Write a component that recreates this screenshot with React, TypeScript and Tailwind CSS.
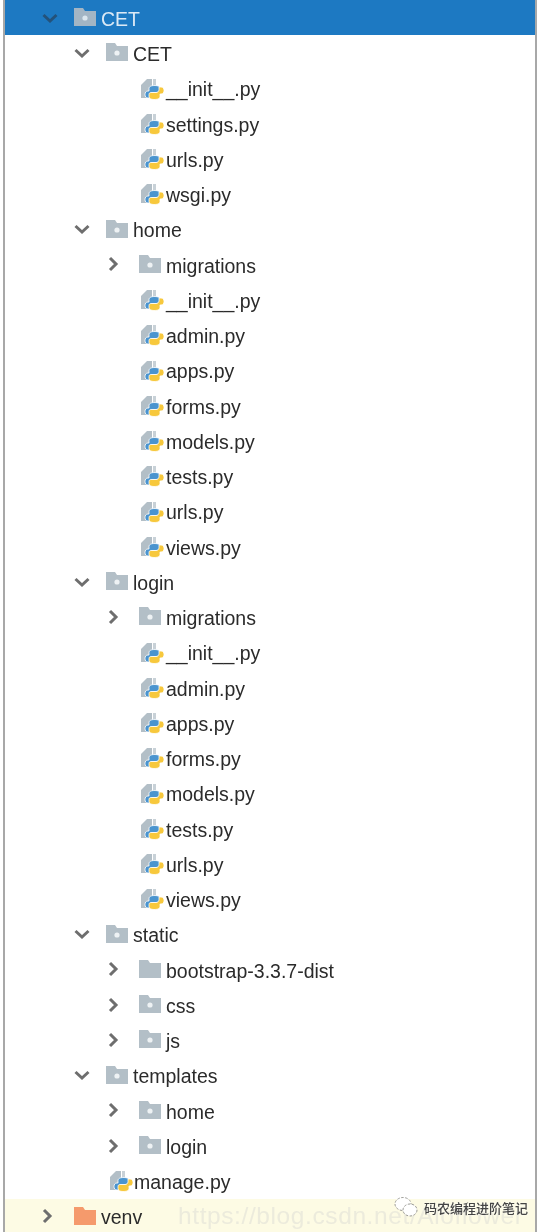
import React from 'react';

type RowKind = 'open' | 'closed' | 'none';
type IconKind = 'folder' | 'plain' | 'py' | 'venv';

interface TreeRow {
  level: 1 | 2 | 3;
  arrow: RowKind;
  icon: IconKind;
  label: string;
}

const pyFiles = ['__init__.py', 'admin.py', 'apps.py', 'forms.py', 'models.py', 'tests.py', 'urls.py', 'views.py'];

const appRows = (name: string): TreeRow[] => [
  { level: 2, arrow: 'open', icon: 'folder', label: name },
  { level: 3, arrow: 'closed', icon: 'folder', label: 'migrations' },
  ...pyFiles.map((f): TreeRow => ({ level: 3, arrow: 'none', icon: 'py', label: f })),
];

const rows: TreeRow[] = [
  { level: 2, arrow: 'open', icon: 'folder', label: 'CET' },
  { level: 3, arrow: 'none', icon: 'py', label: '__init__.py' },
  { level: 3, arrow: 'none', icon: 'py', label: 'settings.py' },
  { level: 3, arrow: 'none', icon: 'py', label: 'urls.py' },
  { level: 3, arrow: 'none', icon: 'py', label: 'wsgi.py' },
  ...appRows('home'),
  ...appRows('login'),
  { level: 2, arrow: 'open', icon: 'folder', label: 'static' },
  { level: 3, arrow: 'closed', icon: 'plain', label: 'bootstrap-3.3.7-dist' },
  { level: 3, arrow: 'closed', icon: 'folder', label: 'css' },
  { level: 3, arrow: 'closed', icon: 'folder', label: 'js' },
  { level: 2, arrow: 'open', icon: 'folder', label: 'templates' },
  { level: 3, arrow: 'closed', icon: 'folder', label: 'home' },
  { level: 3, arrow: 'closed', icon: 'folder', label: 'login' },
];

const Arrow: React.FC<{ kind: RowKind; color: string }> = ({ kind, color }) => {
  if (kind === 'none') return null;
  return (
    <svg width="18" height="18" viewBox="0 0 18 18" fill="none" stroke={color} strokeWidth="3" className="shrink-0">
      {kind === 'open' ? <path d="M2.5 6l6.5 6 6.5-6" /> : <path d="M4 3l6 6-6 6" />}
    </svg>
  );
};

const FolderIcon: React.FC<{ fill?: string; dot?: string }> = ({ fill = '#b3bfc7', dot }) => (
  <svg width="22" height="18" viewBox="0 0 22 18" className="-ml-[1px] -mt-[1px] shrink-0">
    <path d="M0 0h9l2 3h11v15H0z" fill={fill} />
    {dot && <circle cx="11" cy="10" r="2.6" fill={dot} />}
  </svg>
);

const PyIcon: React.FC = () => (
  <svg width="23" height="21" viewBox="0 0 23 21" className="ml-[1px] mt-[2px] shrink-0">
    <path d="M0 6L6 0h5v19H0z" fill="#b3bfc7" />
    <path d="M12 0h3v9h-3z" fill="#c8d1d7" />
    <path
      d="M14 6.5c-3.5 0-6 .8-6 3V12H7c-2 0-3 1.5-3 3.5S5 19 7 19h2v-2.5c0-2 1.5-3 3-3h5c1.5 0 2-1 2-2V9.5c0-2-2-3-5-3z"
      fill="#4a94cf"
      stroke="#ffffff"
      strokeWidth="0.8"
    />
    <path
      d="M14 6.5c-3.5 0-6 .8-6 3V12H7c-2 0-3 1.5-3 3.5S5 19 7 19h2v-2.5c0-2 1.5-3 3-3h5c1.5 0 2-1 2-2V9.5c0-2-2-3-5-3z"
      fill="#f7c83c"
      stroke="#ffffff"
      strokeWidth="0.8"
      transform="rotate(180 13.5 13.5)"
    />
  </svg>
);

const RowIcon: React.FC<{ icon: IconKind }> = ({ icon }) => {
  if (icon === 'py') return <PyIcon />;
  if (icon === 'venv') return <FolderIcon fill="#f59a6c" />;
  if (icon === 'plain') return <FolderIcon />;
  return <FolderIcon dot="#eef2f4" />;
};

const levelPad: Record<number, string> = {
  1: 'pl-[36px]',
  2: 'pl-[68px]',
  3: 'pl-[101px]',
};

const Row: React.FC<{ row: TreeRow }> = ({ row }) => (
  <div className={`flex h-[35.26px] items-center ${levelPad[row.level]}`}>
    <div className="mr-[16px] flex w-[18px] justify-center">
      <Arrow kind={row.arrow} color="#6e6e6e" />
    </div>
    <div className="mr-[4px] flex w-[22px]">
      <RowIcon icon={row.icon} />
    </div>
    <span className="mt-[4px] text-[19.5px] leading-none text-[#2b2b2b]">{row.label}</span>
  </div>
);

const App: React.FC = () => {
  return (
    <div className="relative h-[1232px] w-[544px] overflow-hidden bg-white font-['Liberation_Sans',Arial,sans-serif] blur-[0.45px]">
      <div className="ml-[3px] h-full w-[534px] border-x-2 border-[#a8a8a8]">
        {/* Selected project root */}
        <div className="flex h-[35.26px] items-center bg-[#1d79c2] pl-[36px]">
          <div className="mr-[16px] flex w-[18px] justify-center">
            <Arrow kind="open" color="#24527a" />
          </div>
          <div className="mr-[4px] flex w-[22px]">
            <FolderIcon fill="#a3b5c4" dot="#dbe6ee" />
          </div>
          <span className="mt-[4px] text-[19.5px] leading-none text-[#dbe9f5]">CET</span>
        </div>

        {rows.map((row, i) => (
          <Row key={i} row={row} />
        ))}

        {/* manage.py sits one level up, without an arrow */}
        <div className="flex h-[35.26px] items-center pl-[104px]">
          <div className="mr-[1px] flex w-[24px]">
            <PyIcon />
          </div>
          <span className="mt-[4px] text-[19.5px] leading-none text-[#2b2b2b]">manage.py</span>
        </div>

        <div className="flex h-[35.26px] items-center bg-[#fdfbe4] pl-[35px]">
          <div className="mr-[17px] flex w-[18px] justify-center">
            <Arrow kind="closed" color="#6e6e6e" />
          </div>
          <div className="mr-[4px] flex w-[22px]">
            <RowIcon icon="venv" />
          </div>
          <span className="mt-[4px] text-[19.5px] leading-none text-[#2b2b2b]">venv</span>
        </div>
      </div>

      {/* Watermarks over the last row */}
      <span className="absolute left-[178px] top-[1204px] text-[24.5px] leading-none tracking-[0.6px] text-[#ecebdc]">
        https://blog.csdn.net/Aioflower
      </span>
      <div className="absolute left-[394px] top-[1196px] flex items-center gap-[6px]">
        <svg width="24" height="22" viewBox="0 0 24 22" fill="#ffffff" stroke="#9a9a95" strokeWidth="1" strokeDasharray="2.5 1.5">
          <ellipse cx="9" cy="8" rx="8" ry="6.5" />
          <ellipse cx="16" cy="14" rx="7" ry="6" />
        </svg>
        <span className="font-['Noto_Sans_CJK_SC',sans-serif] text-[13px] font-medium leading-none text-[#444444] [text-shadow:0_0_3px_#ffffff]">
          码农编程进阶笔记
        </span>
      </div>
    </div>
  );
};

export default App;
